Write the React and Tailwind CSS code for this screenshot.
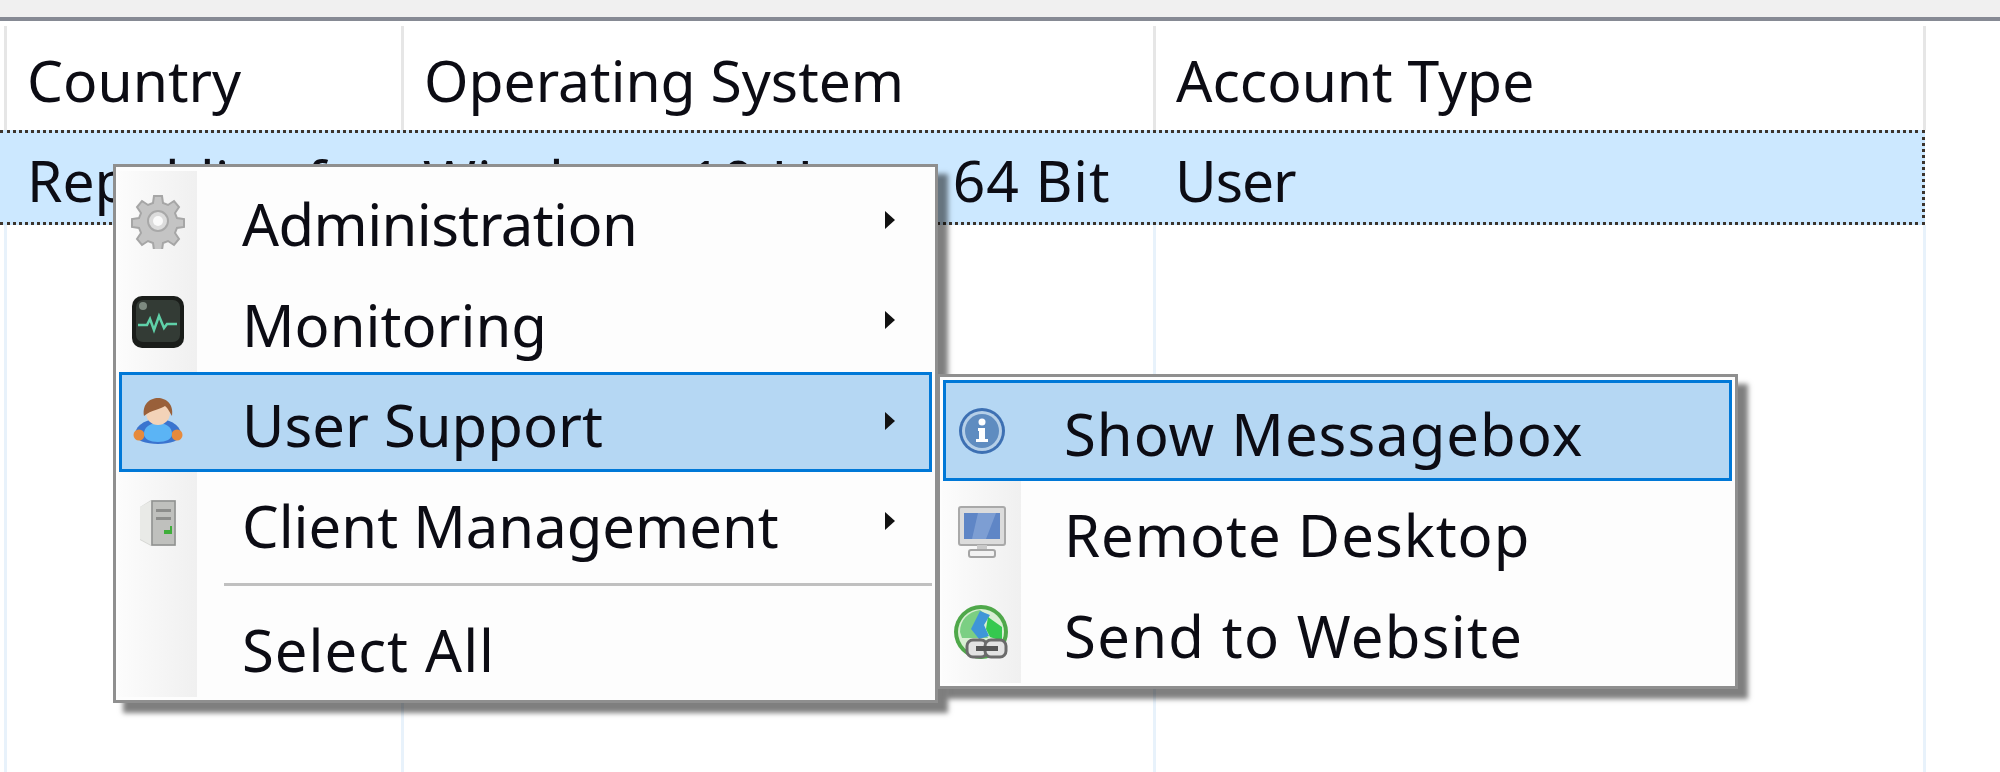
import { useId } from 'react';

const GearIcon = () => (
  <svg width="56" height="56" viewBox="0 0 56 56">
    <g fill="#c4c4c4" stroke="#a6a6a6" strokeWidth="2">
      <path d="M24 3h8l1 7 5 2 6-4 5 6-4 6 2 5 7 1v8l-7 1-2 5 4 6-5 6-6-4-5 2-1 7h-8l-1-7-5-2-6 4-5-6 4-6-2-5-7-1v-8l7-1 2-5-4-6 5-6 6 4 5-2z" />
    </g>
    <circle cx="28" cy="28" r="10" fill="#dcdcdc" stroke="#a8a8a8" strokeWidth="2" />
    <circle cx="28" cy="28" r="5" fill="#fafafa" />
  </svg>
);

const MonitorIcon = () => (
  <svg width="54" height="54" viewBox="0 0 54 54">
    <rect x="1" y="1" width="52" height="52" rx="10" fill="#1a1d1a" />
    <rect x="5" y="5" width="44" height="42" rx="7" fill="#333b35" />
    <circle cx="12" cy="11" r="4" fill="#7d8a80" />
    <path d="M7 30h9l3-6 4 11 5-14 5 12 3-4h10" fill="none" stroke="#5fd0a8" strokeWidth="2.5" />
  </svg>
);

const UserIcon = () => (
  <svg width="50" height="50" viewBox="0 0 50 50">
    <path d="M2 38c0-9 10-16 23-16s23 7 23 16c0 5-11 9-23 9S2 43 2 38z" fill="#3a74cf" />
    <circle cx="6" cy="38" r="5.5" fill="#e68a3c" />
    <circle cx="44" cy="38" r="5.5" fill="#e68a3c" />
    <path d="M11 37c0-7 6-11 14-11s14 4 14 11c0 5-6 8-14 8s-14-3-14-8z" fill="#5bb4f5" />
    <circle cx="25" cy="16" r="12" fill="#f3d3b8" />
    <path d="M11 19C9 7 17 1 25 1s16 6 14 18c-2-3-4-8-7-10-4 3-14 4-21 10z" fill="#99603a" />
  </svg>
);

const ServerIcon = () => (
  <svg width="38" height="48" viewBox="0 0 38 48">
    <path d="M1 8l11-7h25v46H12L1 41z" fill="#d6d7d4" />
    <path d="M13 2h23v44H13z" fill="#bfc0bd" stroke="#8f908e" strokeWidth="1.5" />
    <path d="M1 8l11-6v44L1 40z" fill="#e9eae7" />
    <path d="M17 10h15v3H17zM17 18h15v3H17z" fill="#8c8d8b" />
    <path d="M25 31h6v-4h2v8h-8z" fill="#3fae3a" />
  </svg>
);

const InfoIcon = () => (
  <svg width="48" height="48" viewBox="0 0 48 48">
    <circle cx="24" cy="24" r="23" fill="#3d70b3" />
    <circle cx="24" cy="24" r="20" fill="#b5cfe8" />
    <circle cx="24" cy="24" r="17" fill="#5f8cc0" />
    <circle cx="24" cy="15" r="3.5" fill="#fff" />
    <path d="M20 21h7v11h3v3H18v-3h3v-8h-1z" fill="#fff" />
  </svg>
);

const DesktopIcon = () => (
  <svg width="48" height="52" viewBox="0 0 48 52">
    <rect x="1" y="1" width="46" height="38" rx="2" fill="#dcdcdc" stroke="#a9a9a9" strokeWidth="2" />
    <rect x="6" y="7" width="36" height="26" fill="#5f86c6" />
    <path d="M20 7h18L28 33H14z" fill="#7d9ed3" />
    <rect x="19" y="39" width="10" height="5" fill="#c9c9c9" />
    <rect x="11" y="44" width="26" height="7" rx="2" fill="#f2f2f2" stroke="#a5a5a5" strokeWidth="2" />
  </svg>
);

const GlobeIcon = () => {
  const clip = useId();
  return (
    <svg width="56" height="56" viewBox="0 0 56 56">
      <clipPath id={clip}>
        <circle cx="27" cy="27" r="23" />
      </clipPath>
      <circle cx="27" cy="27" r="27" fill="#4fa84a" />
      <circle cx="27" cy="27" r="23" fill="#d8efd2" />
      <g clipPath={`url(#${clip})`}>
        <path d="M6 27c0-12 8-20 20-22l8 6-6 10 6 12H8z" fill="#7bcf83" />
        <path d="M26 6l10 4-6 10 5 11-10 3-8-10z" fill="#3f96d8" />
        <path d="M34 12l14 10v14l-12-4-4-8z" fill="#35c94f" />
      </g>
      <rect x="13" y="35" width="20" height="17" rx="6" fill="#e2e2e2" stroke="#6b6b6b" strokeWidth="3" />
      <rect x="31" y="35" width="21" height="17" rx="6" fill="#e2e2e2" stroke="#6b6b6b" strokeWidth="3" />
      <rect x="22" y="41" width="22" height="5" fill="#555" />
    </svg>
  );
};

const Arrow = () => (
  <svg className="absolute right-[40px] top-[40px]" width="11" height="18" viewBox="0 0 11 18">
    <path d="M1 0l10 9-10 9z" fill="#111" />
  </svg>
);

const MenuRow = ({ icon, label, active, arrow, labelClass = 'ml-[45px]' }) => (
  <div className="relative flex h-[101.5px] items-center">
    {active && <div className="absolute inset-y-0 left-[1px] right-[3px] border-[3px] border-[#0078d7] bg-[#b5d7f3]" />}
    <div
      className={`relative flex h-full w-[79px] shrink-0 items-center justify-center ${
        active ? '' : 'bg-gradient-to-r from-[#fcfcfc] to-[#f0f0f0]'
      }`}
    >
      {icon}
    </div>
    <span className={`relative pt-[6px] text-[58px] leading-none text-[#0c0c14] ${labelClass}`}>{label}</span>
    {arrow && <Arrow />}
  </div>
);

export default function App() {
  return (
    <div className="relative flex h-[772px] w-[2000px] flex-col overflow-hidden bg-white font-['Noto_Sans',sans-serif] text-[57px] leading-none text-[#0c0c14] blur-[0.6px]">
      <div className="h-[21px] shrink-0 border-b-[4px] border-[#868a94] bg-[#f0f0f0]" />

      {/* Column headers */}
      <div className="flex h-[109px] shrink-0 items-center pl-[4px] pt-[5px]">
        <div className="flex h-full w-[400px] items-center border-x-[3px] border-[#e6e6e6] pl-[20px] pt-[5px]">Country</div>
        <div className="flex h-full w-[752px] items-center border-r-[3px] border-[#e6e6e6] pl-[20px] pt-[5px]">Operating System</div>
        <div className="flex h-full w-[770px] items-center border-r-[3px] border-[#e6e6e6] pl-[20px] pt-[5px]">Account Type</div>
      </div>

      {/* Selected row */}
      <div className="flex h-[95px] w-[1925px] shrink-0 items-center border-y-[3px] border-r-[3px] border-dotted border-[#3c342c] bg-[#cce8ff] pl-[27px] pt-[6px]">
        <span className="w-[396px]">Republic of</span>
        <span className="w-[752px] tracking-[0.9px]">Windows 10 Home 64 Bit</span>
        <span className="tracking-[-1px]">User</span>
      </div>

      {/* Empty grid below */}
      <div className="flex flex-1 pl-[4px]">
        <div className="w-[400px] border-x-[3px] border-[#e8f2fb]" />
        <div className="w-[752px] border-r-[3px] border-[#e8f2fb]" />
        <div className="w-[770px] border-r-[3px] border-[#e8f2fb]" />
      </div>

      {/* Context menu */}
      <div className="absolute left-[113px] top-[164px] flex h-[539px] w-[825px] flex-col border-[3px] border-[#8f8f8f] bg-[#fdfdfd] pb-[3px] pl-[2px] pt-[4px] shadow-[10px_10px_5px_rgba(0,0,0,0.5)]">
        <MenuRow icon={<GearIcon />} label="Administration" labelClass="ml-[45px] tracking-[-0.6px]" arrow />
        <MenuRow icon={<MonitorIcon />} label="Monitoring" arrow />
        <MenuRow icon={<UserIcon />} label="User Support" arrow active />
        <MenuRow icon={<ServerIcon />} label="Client Management" arrow />
        <div className="flex h-[24px] items-center">
          <div className="h-full w-[79px] shrink-0 bg-gradient-to-r from-[#fcfcfc] to-[#f0f0f0]" />
          <div className="ml-[27px] mr-[3px] h-[3px] flex-1 bg-[#c0c0c0]" />
        </div>
        <MenuRow label="Select All" labelClass="ml-[45px] tracking-[1px]" />
      </div>

      {/* Submenu */}
      <div className="absolute left-[937px] top-[374px] flex h-[315px] w-[801px] flex-col border-[3px] border-[#8f8f8f] bg-[#fdfdfd] py-[3px] pl-[2px] shadow-[10px_10px_5px_rgba(0,0,0,0.5)]">
        <MenuRow icon={<InfoIcon />} label="Show Messagebox" labelClass="ml-[43px] tracking-[1px]" active />
        <MenuRow icon={<DesktopIcon />} label="Remote Desktop" labelClass="ml-[43px] tracking-[1px]" />
        <MenuRow icon={<GlobeIcon />} label="Send to Website" labelClass="ml-[43px] tracking-[1.3px]" />
      </div>
    </div>
  );
}
